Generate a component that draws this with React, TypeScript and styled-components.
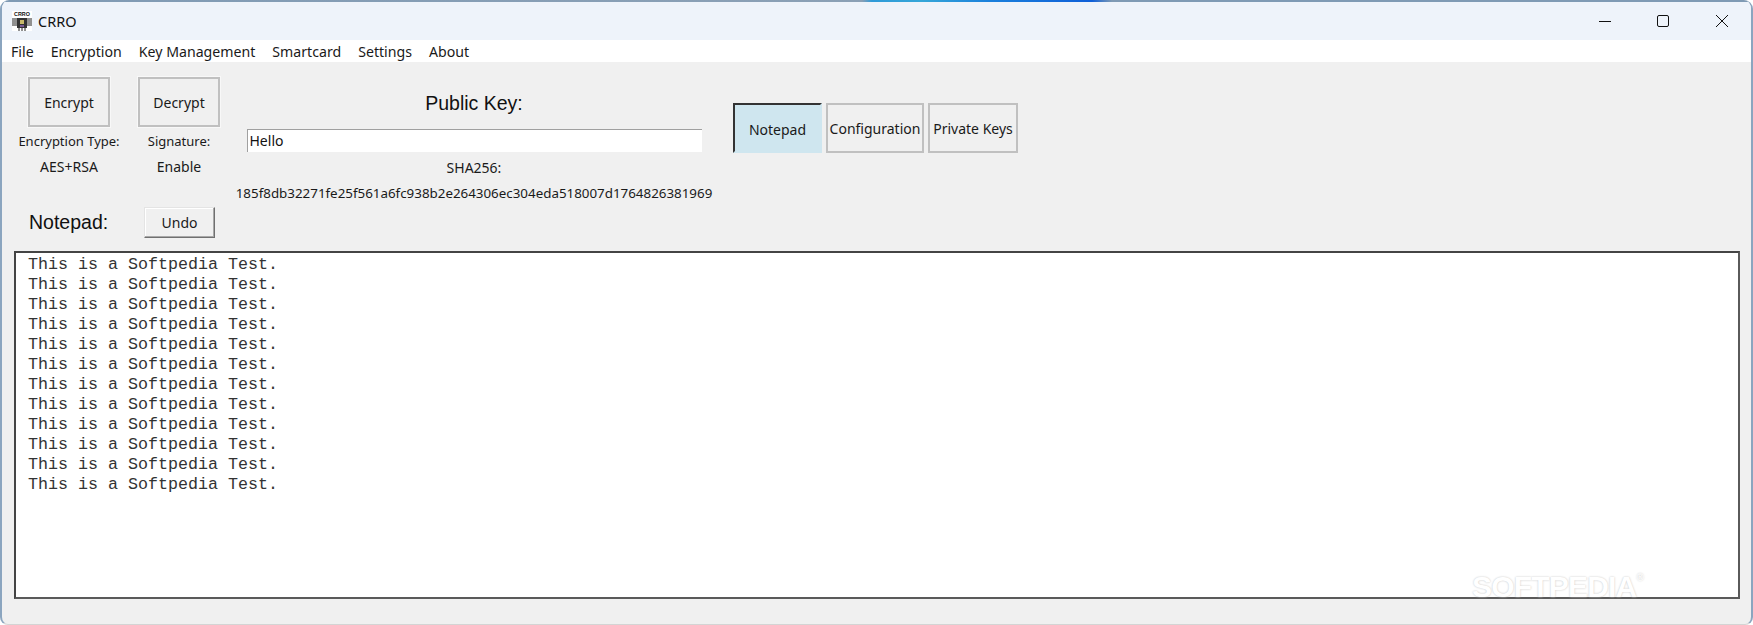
import React from "react";
import styled, { createGlobalStyle } from "styled-components";

const GlobalStyle = createGlobalStyle`
  html, body {
    margin: 0;
    padding: 0;
    background: #ffffff;
  }
  * {
    box-sizing: border-box;
  }
`;

const uiFont = `"Noto Sans", "Open Sans", sans-serif`;
const labelFont = `"Liberation Sans", Arial, sans-serif`;
const MENU = ["File", "Encryption", "Key Management", "Smartcard", "Settings", "About"];
const HASH = "185f8db32271fe25f561a6fc938b2e264306ec304eda518007d1764826381969";
const LINES = Array.from({ length: 12 }, () => "This is a Softpedia Test.");

export default function App() {
  return (
    <>
      <GlobalStyle />
      <Window>
        <TopEdge />
        <TitleBar>
          <AppIcon />
          <AppName>CRRO</AppName>
          <Controls>
            <ControlButton>
              <svg width="14" height="14" viewBox="0 0 14 14">
                <path d="M1 7.5H13" stroke="#111" strokeWidth="1" />
              </svg>
            </ControlButton>
            <ControlButton>
              <svg width="14" height="14" viewBox="0 0 14 14">
                <rect x="1.5" y="1.5" width="11" height="11" rx="1.5" fill="none" stroke="#111" strokeWidth="1" />
              </svg>
            </ControlButton>
            <ControlButton>
              <svg width="14" height="14" viewBox="0 0 14 14">
                <path d="M1 1L13 13M13 1L1 13" stroke="#111" strokeWidth="1" />
              </svg>
            </ControlButton>
          </Controls>
        </TitleBar>
        <MenuBar>
          {MENU.map((item) => (
            <MenuItem key={item}>{item}</MenuItem>
          ))}
        </MenuBar>
        <Content>
          <TopSection>
            <ActionColumn $width={106}>
              <ActionButton>Encrypt</ActionButton>
              <SmallLabel>Encryption Type:</SmallLabel>
              <SmallValue>AES+RSA</SmallValue>
            </ActionColumn>
            <ActionColumn $width={80}>
              <ActionButton>Decrypt</ActionButton>
              <SmallLabel>Signature:</SmallLabel>
              <SmallValue>Enable</SmallValue>
            </ActionColumn>
            <KeyColumn>
              <BigLabel>Public Key:</BigLabel>
              <KeyInput>Hello</KeyInput>
              <SmallValue>SHA256:</SmallValue>
              <HashText>{HASH}</HashText>
            </KeyColumn>
            <Tabs>
              <Tab $active $width={89}>Notepad</Tab>
              <Tab $width={98}>Configuration</Tab>
              <Tab $width={90}>Private Keys</Tab>
            </Tabs>
          </TopSection>
          <NotepadRow>
            <NotepadLabel>Notepad:</NotepadLabel>
            <UndoButton>Undo</UndoButton>
          </NotepadRow>
          <Editor>
            {LINES.map((line, i) => (
              <EditorLine key={i}>{line}</EditorLine>
            ))}
          </Editor>
        </Content>
        <Watermark>
          SOFTPEDIA<sup>®</sup>
        </Watermark>
      </Window>
    </>
  );
}

function AppIcon() {
  return (
    <svg width="20" height="20" viewBox="0 0 20 20" style={{ flexShrink: 0 }}>
      <rect width="20" height="20" fill="#fff" />
      <text x="10" y="5.4" textAnchor="middle" fontFamily={labelFont} fontSize="5.4" fontWeight="700" fill="#111">
        CRRO
      </text>
      <path
        d="M0 8H5M0 10H5M0 12H5M0 14H5M15 8H20M15 10H20M15 12H20M15 14H20M7 17V20M10 17V20M13 17V20"
        stroke="#222"
        strokeWidth="1"
      />
      <rect x="5" y="7" width="10" height="10" fill="#333" />
      <rect x="8" y="9" width="4" height="4" fill="#c9b96a" />
      <rect x="8" y="14" width="4" height="2" fill="#7a5a96" />
    </svg>
  );
}

const Window = styled.div`
  position: relative;
  width: 1753px;
  height: 625px;
  display: flex;
  flex-direction: column;
  overflow: hidden;
  background: #f0f0f0;
  border-left: 2px solid #8ba5bf;
  border-right: 2px solid #8ba5bf;
  border-bottom: 1px solid #d4d4d4;
  border-radius: 9px 9px 8px 8px;
`;

const TopEdge = styled.div`
  height: 2px;
  flex-shrink: 0;
  background: linear-gradient(
    90deg,
    #7f9ab4 0,
    #8ba0b5 860px,
    #2f9ad8 870px,
    #35a6d8 920px,
    #1a7fdc 990px,
    #0f5fd8 1090px,
    #7f9ab4 1110px,
    #7f9ab4 100%
  );
`;

const TitleBar = styled.div`
  height: 38px;
  flex-shrink: 0;
  display: flex;
  align-items: center;
  padding-left: 10px;
  background: #eef3fa;
`;

const AppName = styled.span`
  margin-left: 6px;
  font: 14.5px ${uiFont};
  color: #111;
`;

const Controls = styled.div`
  margin-left: auto;
  display: flex;
`;

const ControlButton = styled.div`
  width: 58.5px;
  height: 38px;
  display: flex;
  align-items: center;
  justify-content: center;
`;

const MenuBar = styled.div`
  height: 22px;
  flex-shrink: 0;
  display: flex;
  align-items: center;
  gap: 17px;
  padding-left: 9px;
  background: #ffffff;
`;

const MenuItem = styled.span`
  font: 14.15px ${uiFont};
  color: #1a1a1a;
`;

const Content = styled.div`
  flex: 1;
  display: flex;
  flex-direction: column;
  padding: 15px 11px 0 12px;
`;

const TopSection = styled.div`
  display: flex;
  align-items: flex-start;
`;

const ActionColumn = styled.div<{ $width: number }>`
  width: ${(p) => p.$width}px;
  margin-right: 15px;
  margin-left: 2px;
  display: flex;
  flex-direction: column;
  align-items: center;
`;

const ActionButton = styled.div`
  width: 82px;
  height: 50px;
  display: flex;
  align-items: center;
  justify-content: center;
  border: 2px solid #c0c0c0;
  box-shadow: 0 0 0 1px #f8f8f8;
  font: 14px ${uiFont};
  color: #1a1a1a;
`;

const SmallLabel = styled.div`
  height: 20px;
  margin-top: 4px;
  white-space: nowrap;
  font: 13px/20px ${uiFont};
  color: #1a1a1a;
`;

const SmallValue = styled.div`
  height: 20px;
  margin-top: 6px;
  white-space: nowrap;
  font: 14px/20px ${uiFont};
  color: #1a1a1a;
`;

const KeyColumn = styled.div`
  width: 476px;
  margin-left: 2px;
  display: flex;
  flex-direction: column;
  align-items: center;
`;

const BigLabel = styled.div`
  height: 24px;
  margin-top: 14px;
  font: 19.5px/24px ${labelFont};
  color: #111;
`;

const KeyInput = styled.div`
  width: 455px;
  height: 23px;
  margin-top: 14px;
  padding-left: 2px;
  background: #ffffff;
  border-top: 1px solid #a0a0a0;
  border-left: 1px solid #a0a0a0;
  font: 14px/22px ${uiFont};
  color: #111;
`;

const HashText = styled.div`
  height: 20px;
  margin-top: 5px;
  white-space: nowrap;
  font: 13.37px/20px ${uiFont};
  color: #1a1a1a;
`;

const Tabs = styled.div`
  display: flex;
  gap: 4px;
  margin-top: 26px;
  margin-left: 21px;
`;

const Tab = styled.div<{ $active?: boolean; $width: number }>`
  width: ${(p) => p.$width}px;
  height: 50px;
  display: flex;
  align-items: center;
  justify-content: center;
  white-space: nowrap;
  font: 14px ${uiFont};
  color: #1a1a1a;
  background: ${(p) => (p.$active ? "#cfe6ef" : "transparent")};
  border: 2px solid ${(p) => (p.$active ? "#cfe6ef" : "#c0c0c0")};
  border-top-color: ${(p) => (p.$active ? "#333" : "#c0c0c0")};
  border-left-color: ${(p) => (p.$active ? "#333" : "#c0c0c0")};
  padding-top: ${(p) => (p.$active ? "2px" : "0")};
`;

const NotepadRow = styled.div`
  display: flex;
  align-items: center;
  height: 31px;
  margin-top: 4px;
  padding-left: 15px;
`;

const NotepadLabel = styled.div`
  width: 115px;
  font: 19.5px/31px ${labelFont};
  color: #111;
`;

const UndoButton = styled.div`
  width: 71px;
  height: 31px;
  display: flex;
  align-items: center;
  justify-content: center;
  background: #f0f0f0;
  border: 1px solid;
  border-color: #e4e4e4 #707070 #707070 #e4e4e4;
  box-shadow: inset -1px -1px 0 #a8a8a8, inset 1px 1px 0 #ffffff;
  font: 14px ${uiFont};
  color: #1a1a1a;
`;

const Editor = styled.div`
  width: 1726px;
  height: 348px;
  margin-top: 13px;
  padding: 2px 12px;
  background: #ffffff;
  border: 2px solid;
  border-color: #444 #5a5a5a #5a5a5a #444;
`;

const EditorLine = styled.div`
  height: 20px;
  font: 16.67px/20px "Liberation Mono", "Courier New", monospace;
  color: #333;
  white-space: pre;
`;

const Watermark = styled.div`
  position: absolute;
  right: 108px;
  bottom: 21px;
  font: 700 30px/32px ${labelFont};
  color: #ffffff;
  letter-spacing: -0.8px;
  text-shadow: 0 0 2px #c0c0c0;
  sup {
    font-size: 10px;
    font-weight: 400;
    vertical-align: 16px;
    line-height: 0;
  }
`;
